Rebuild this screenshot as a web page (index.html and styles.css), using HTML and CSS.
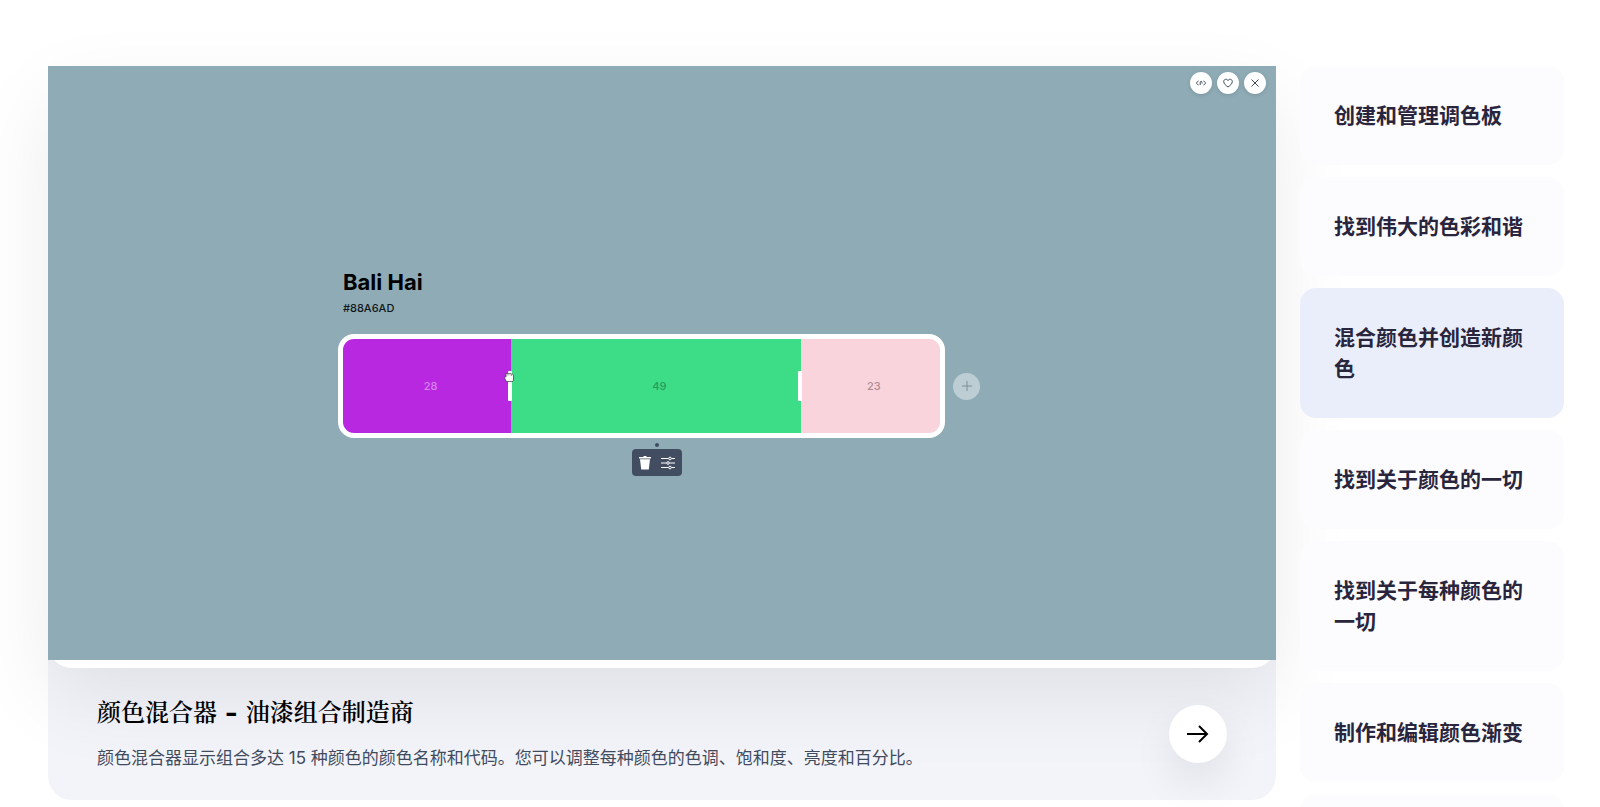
FILE: index.html
```html
<!DOCTYPE html>
<html lang="zh-CN">
<head>
    <meta charset="UTF-8">
    <meta name="viewport" content="width=device-width, initial-scale=1.0">
    <title>颜色混合器</title>
    <link rel="stylesheet" href="styles.css">
</head>
<body>
    <main class="features">
        <article class="card">
            <div class="panel">
                <div class="preview">
                    <div class="actions">
                        <button class="action" aria-label="Code">
                            <svg width="10" height="10" viewBox="0 0 10 10"><path d="M2.600 3C1.200 3.600.600 4.300.600 5s.6 1.400 2 2M7.400 3c1.400.6 2 1.300 2 2s-.6 1.400-2 2M4.200 7V4.500c0-1.600 1.800-1.600 1.800 0V5.500"/></svg>
                        </button>
                        <button class="action" aria-label="Like">
                            <svg width="10" height="10" viewBox="0 0 10 10"><path d="M5 9C3 7.500.7 5.800.7 3.500.7 1.100 3.900.4 5 2.500 6.100.4 9.300 1.100 9.300 3.500 9.300 5.800 7 7.500 5 9z"/></svg>
                        </button>
                        <button class="action" aria-label="Close">
                            <svg width="10" height="10" viewBox="0 0 10 10"><path d="M1.500 1.500l7 7M8.500 1.500l-7 7"/></svg>
                        </button>
                    </div>
                    <div class="mixer">
                        <h3 class="color-name">Bali Hai</h3>
                        <p class="color-code">#88A6AD</p>
                        <div class="mixer-row">
                            <div class="bar">
                                <div class="segment purple" style="flex-grow: 28">28
                                    <span class="handle"></span>
                                    <svg class="hand" width="10" height="12" viewBox="0 0 10 12"><path d="M2.500 10.500 1 8C0 6.500.8 5.500 2 6V3.500c0-1.200 1.500-1.200 1.800-.3C4 2 5.500 2 5.800 3c.3-1 1.700-.8 1.900.4.700-.6 1.800-.2 1.800 1V8c0 1.200-.5 2-1 2.500z"/><path d="M4 3.500v1M6 3.200v1M7.700 3.800v1"/></svg>
                                </div>
                                <div class="segment green" style="flex-grow: 49">49
                                    <span class="handle"></span>
                                    <div class="toolbar">
                                        <button class="tool" aria-label="Delete">
                                            <svg width="12" height="14" viewBox="0 0 12 14"><path class="fill" d="M4.500 0h3v1H12v1.500H0V1h4.500zM1 3.200h10L9.800 13.500H2.200z"/></svg>
                                        </button>
                                        <button class="tool" aria-label="Adjust">
                                            <svg width="14" height="14" viewBox="0 0 14 14"><path d="M0 2.500h7.500M10.500 2.500H14M0 7h5.500M8.500 7H14M0 11.500h7.500M10.500 11.500H14"/><circle cx="9" cy="2.500" r="1.300"/><circle cx="7" cy="7" r="1.300"/><circle cx="9" cy="11.500" r="1.300"/></svg>
                                        </button>
                                    </div>
                                </div>
                                <div class="segment pink" style="flex-grow: 23">23</div>
                            </div>
                            <button class="add" aria-label="Add color">
                                <svg width="10" height="10" viewBox="0 0 10 10"><path d="M5 0v10M0 5h10"/></svg>
                            </button>
                        </div>
                    </div>
                </div>
            </div>
            <div class="caption">
                <div class="caption-text">
                    <h2>颜色混合器 – 油漆组合制造商</h2>
                    <p>颜色混合器显示组合多达 15 种颜色的颜色名称和代码。您可以调整每种颜色的色调、饱和度、亮度和百分比。</p>
                </div>
                <a href="#" class="go" aria-label="Open">
                    <svg width="22" height="18" viewBox="0 0 22 18"><path d="M0 9h20M12 1l8 8-8 8"/></svg>
                </a>
            </div>
        </article>
        <nav class="tabs">
            <button class="tab">创建和管理调色板</button>
            <button class="tab">找到伟大的色彩和谐</button>
            <button class="tab active">混合颜色并创造新颜色</button>
            <button class="tab">找到关于颜色的一切</button>
            <button class="tab">找到关于每种颜色的一切</button>
            <button class="tab">制作和编辑颜色渐变</button>
            <button class="tab">&nbsp;</button>
        </nav>
    </main>
</body>
</html>
```
FILE: styles.css
```css
* {
    box-sizing: border-box;
}
body {
    margin: 0;
    height: 100vh;
    overflow: hidden;
    background: #fff;
    font-family: Inter, "Noto Sans CJK SC", sans-serif;
}
h2, h3, p {
    margin: 0;
}
button {
    font-family: inherit;
    border: none;
    padding: 0;
    cursor: pointer;
}
svg {
    display: block;
    fill: none;
    stroke: currentColor;
}
.features {
    display: grid;
    grid-template-columns: 1fr 264px;
    gap: 24px;
    align-items: start;
    padding: 66px 36px 0 48px;
}

/* main card */
.card {
    background: #f3f4fa;
    border-radius: 24px;
}
.panel {
    padding-bottom: 8px;
    background: #fff;
    border-radius: 24px;
    box-shadow: 0 30px 80px rgba(0, 0, 0, 0.08);
}
.preview {
    display: flex;
    flex-direction: column;
    aspect-ratio: 1228 / 594;
    background: #8facb6;
}
.actions {
    display: flex;
    justify-content: flex-end;
    gap: 5px;
    padding: 6px 10px;
}
.action {
    display: flex;
    justify-content: center;
    align-items: center;
    width: 22px;
    height: 22px;
    border-radius: 50%;
    background: #fff;
    color: #414b5e;
    box-shadow: 0 1px 4px rgba(0, 0, 0, 0.15);
}

/* mixer */
.mixer {
    width: 648px;
    max-width: 100%;
    margin: auto;
    padding: 0 6px 56px 0;
}
.color-name {
    padding-left: 5px;
    font-size: 22px;
    line-height: 32px;
    font-weight: 700;
}
.color-code {
    padding-left: 5px;
    font-size: 11px;
    line-height: 20px;
    font-weight: 500;
    color: #10181c;
}
.mixer-row {
    display: flex;
    align-items: center;
    gap: 8px;
    margin-top: 16px;
}
.bar {
    display: flex;
    flex: 1;
    height: 104px;
    border: 5px solid #fff;
    border-radius: 16px;
    background: #fff;
}
.segment {
    position: relative;
    display: flex;
    flex-basis: 0;
    justify-content: center;
    align-items: center;
    font-size: 11px;
    font-weight: 500;
}
.purple {
    padding-left: 7px;
    background: #b728e0;
    border-radius: 11px 0 0 11px;
    color: #d784ef;
}
.green {
    padding-left: 7px;
    background: #3ddc87;
    color: #269c5d;
}
.pink {
    padding-left: 7px;
    background: #fad4dc;
    border-radius: 0 11px 11px 0;
    color: #a98c94;
}
.handle {
    position: absolute;
    z-index: 1;
    right: -1px;
    top: calc(50% - 15px);
    width: 4px;
    height: 30px;
    border-radius: 1px;
    background: #fff;
}
.hand {
    position: absolute;
    z-index: 2;
    right: -3px;
    top: 32px;
    fill: #fff;
    stroke: #333;
    stroke-width: 0.7;
}
.toolbar {
    position: absolute;
    top: calc(100% + 16px);
    left: calc(50% - 24px);
    display: flex;
    justify-content: center;
    align-items: center;
    gap: 10px;
    width: 50px;
    height: 27px;
    border-radius: 4px;
    background: #434d62;
}
.toolbar::before {
    content: "";
    position: absolute;
    top: -6px;
    left: 23px;
    width: 4px;
    height: 4px;
    border-radius: 50%;
    background: #434d62;
}
.tool {
    background: none;
    color: #fff;
}
.fill {
    fill: currentColor;
    stroke: none;
}
.add {
    display: flex;
    justify-content: center;
    align-items: center;
    width: 27px;
    height: 27px;
    border-radius: 50%;
    background: #bccdd3;
    color: #7f9097;
}

/* caption under the preview */
.caption {
    display: flex;
    justify-content: space-between;
    align-items: center;
    gap: 24px;
    padding: 29px 49px;
}
.caption h2 {
    margin-bottom: 16px;
    font-family: "DejaVu Sans", "Noto Serif CJK SC", serif;
    font-size: 24px;
    line-height: 32px;
    font-weight: 600;
}
.caption p {
    font-size: 17px;
    line-height: 26px;
    color: #414b5e;
}
.go {
    display: flex;
    flex-shrink: 0;
    justify-content: center;
    align-items: center;
    width: 58px;
    height: 58px;
    border-radius: 50%;
    background: #fff;
    color: #000;
    box-shadow: 0 20px 40px rgba(0, 0, 0, 0.08);
}
.go svg {
    stroke-width: 2;
}

/* feature tabs */
.tabs {
    position: relative;
    display: flex;
    flex-direction: column;
    gap: 12px;
}
.tab {
    padding: 34px;
    border-radius: 16px;
    background: #fcfcfe;
    color: #29253c;
    font-size: 21px;
    line-height: 31px;
    font-weight: 600;
    text-align: left;
}
.tab.active {
    background: #eaeefb;
}
```
